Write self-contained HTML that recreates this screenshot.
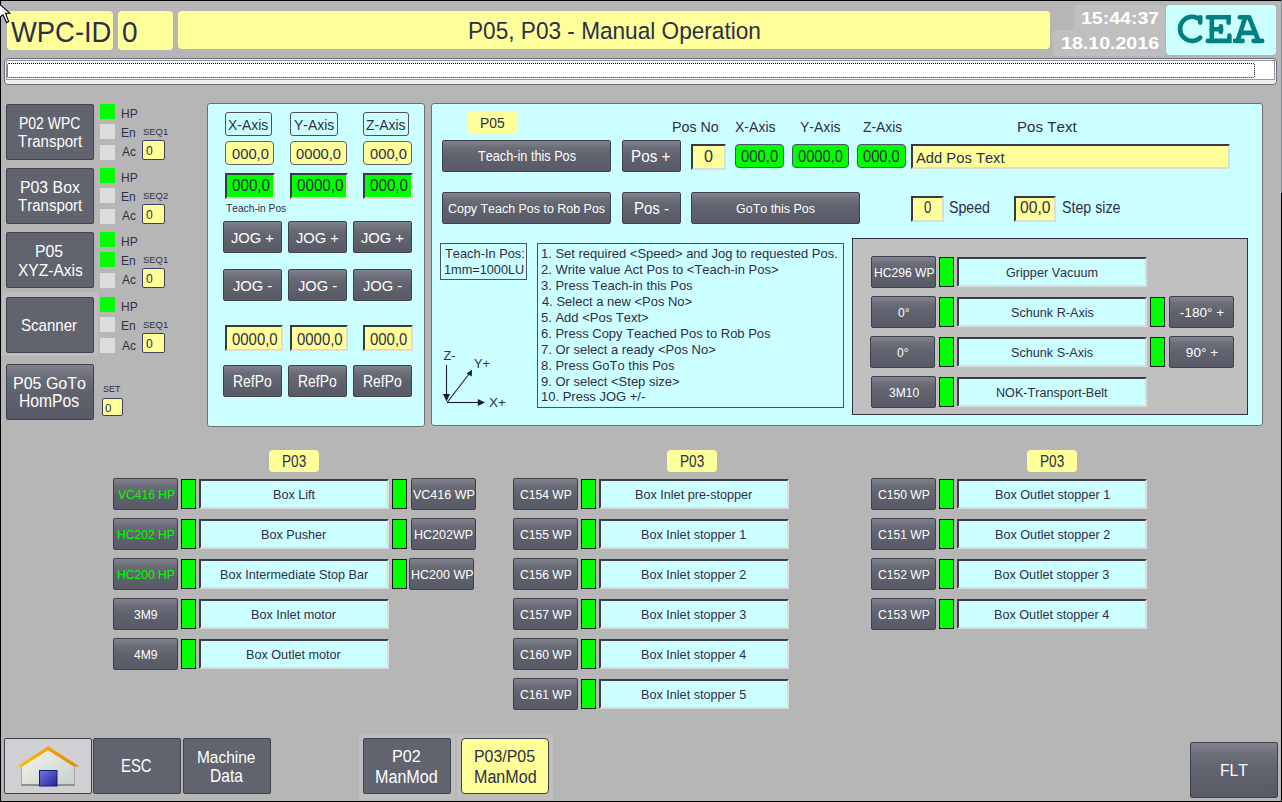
<!DOCTYPE html><html><head><meta charset="utf-8"><style>
*{margin:0;padding:0;box-sizing:border-box}
html,body{width:1282px;height:802px;overflow:hidden}
body{position:relative;background:#b6b6b6;font-family:"Liberation Sans",sans-serif;color:#2e2e48;font-kerning:none}
.a{position:absolute}
.tx{position:absolute;white-space:nowrap;line-height:1;transform-origin:0 0}
.ylw{background:#ffff99;border-radius:4px}
.cyp{background:#ccffff;border:1px solid #707070;border-radius:3px}
.btnf{background:#61636f;border:1px solid #40424c;border-radius:2px}
.btng{background:linear-gradient(#82838f 0%,#6b6d79 22%,#60626e 50%,#585a67 100%);border:1px solid #3e404c;border-radius:2px}
.snk{background:#ffff99;border-style:solid;border-width:2px;border-color:#383848 #dcdcdc #dcdcdc #383848}
.snkc{background:#ccffff;border-style:solid;border-width:2px;border-color:#3c3c4c #dcdcdc #dcdcdc #3c3c4c}
.snkg{background:#00ff00;border-style:solid;border-width:2px;border-color:#383848 #dcdcdc #dcdcdc #383848}
.grn{background:#00ff00;border:1px solid #181820}
.grnr{background:#00ff00;border:1px solid #50506a;border-radius:4px}
.inp{background:#ffff99;border:1px solid #404058;border-radius:2px}
</style></head><body><div class="a " style="left:0px;top:0px;width:1282px;height:1px;background:#000"></div>
<div class="a " style="left:0px;top:0px;width:1px;height:802px;background:#000"></div>
<div class="a " style="left:0px;top:801px;width:1282px;height:1px;background:#000"></div>
<div class="a " style="left:1281px;top:0px;width:1px;height:193px;background:#7b8a9c"></div>
<div class="a " style="left:1281px;top:193px;width:1px;height:609px;background:#000"></div>
<div class="a ylw" style="left:7px;top:11px;width:106px;height:39px;"></div>
<div class="a ylw" style="left:118px;top:11px;width:55px;height:39px;"></div>
<div class="a ylw" style="left:178px;top:11px;width:872px;height:38px;"></div>
<div class="tx" style="left:10.68px;top:17px;font-size:30.23px;transform:scaleX(0.9062);">WPC-ID</div>
<div class="tx" style="left:121.51px;top:17px;font-size:29.51px;transform:scaleX(0.9499);">0</div>
<div class="tx" style="left:468.14px;top:19px;font-size:24.13px;transform:scaleX(0.9373);">P05, P03 - Manual Operation</div>
<div class="a " style="left:1053px;top:30px;width:112px;height:26px;background:#bfbfbf;border-radius:3px"></div>
<div class="a " style="left:1074px;top:5px;width:91px;height:26px;background:#bfbfbf;border-radius:3px"></div>
<div class="tx" style="left:1081.07px;top:11px;font-size:16.86px;transform:scaleX(1.1585);color:#ffffff;font-weight:bold;">15:44:37</div>
<div class="tx" style="left:1061.07px;top:36px;font-size:16.86px;transform:scaleX(1.1619);color:#ffffff;font-weight:bold;">18.10.2016</div>
<div class="a " style="left:1166px;top:5px;width:110px;height:50px;background:#ccffff;border-radius:4px"></div>
<svg class="a" style="left:1166px;top:5px" width="110" height="50" viewBox="1166 5 110 50">
<g fill="none" stroke="#008080" stroke-width="4.6" stroke-linecap="round" stroke-linejoin="miter">
<path d="M1199.8,19.6 A12,12.1 0 1 0 1200.3,37.6"/>
<path d="M1200.2,17.4 V22.6"/>
<path d="M1207.8,17.3 H1228.6 V22.8"/>
<path d="M1211.8,17.3 V40.9"/>
<path d="M1207.8,40.9 H1229.4 V35.6"/>
<path d="M1211.8,29.2 H1220.9"/>
<path d="M1220.9,26.4 V32"/>
<path d="M1239.8,17.3 H1249.2"/>
<path d="M1245.2,17.6 L1237.6,40.9" stroke-linecap="butt"/>
<path d="M1249.2,17.3 L1258.6,40.9" stroke-linecap="butt"/>
<path d="M1241.3,32.9 H1254.6"/>
<path d="M1235,40.9 H1242.6"/>
<path d="M1253.6,40.9 H1262.2"/>
</g></svg>
<div class="a " style="left:4px;top:58px;width:1273px;height:27px;background:#f0f0f0;border:1px solid #6c6e7c;border-radius:4px"></div>
<div class="a " style="left:6px;top:60px;width:1269px;height:20px;background:#fff;border:1px solid #9496a2"></div>
<div class="a " style="left:7px;top:63px;width:1248px;height:15px;border:1px dotted #000;border-radius:2px"></div>
<div class="a " style="left:2px;top:292px;width:96px;height:64px;background:#bdbdbd"></div>
<div class="a btnf" style="left:6px;top:104px;width:88px;height:56px;"></div>
<div class="tx" style="left:19.15px;top:116px;font-size:15.99px;transform:scaleX(0.8744);color:#ffffff;">P02 WPC</div>
<div class="tx" style="left:17.86px;top:134px;font-size:15.84px;transform:scaleX(0.9493);color:#ffffff;">Transport</div>
<div class="a " style="left:100px;top:104px;width:15px;height:15px;background:#00ff00"></div>
<div class="tx" style="left:120.62px;top:108px;font-size:12.6px;transform:scaleX(0.9500);">HP</div>
<div class="a " style="left:100px;top:124px;width:15px;height:15px;background:#dcdcdc"></div>
<div class="tx" style="left:120.62px;top:127px;font-size:12.6px;transform:scaleX(0.9500);">En</div>
<div class="a " style="left:100px;top:145px;width:15px;height:15px;background:#dcdcdc"></div>
<div class="tx" style="left:121.58px;top:146px;font-size:12.6px;transform:scaleX(0.9500);">Ac</div>
<div class="tx" style="left:142.77px;top:127px;font-size:9.59px;transform:scaleX(0.9845);">SEQ1</div>
<div class="a inp" style="left:142px;top:140px;width:23px;height:20px;"></div>
<div class="tx" style="left:146.43px;top:145px;font-size:12.8px;transform:scaleX(0.9500);">0</div>
<div class="a btnf" style="left:6px;top:168px;width:88px;height:56px;"></div>
<div class="tx" style="left:19.70px;top:180px;font-size:15.99px;transform:scaleX(0.9904);color:#ffffff;">P03 Box</div>
<div class="tx" style="left:17.86px;top:198px;font-size:15.84px;transform:scaleX(0.9493);color:#ffffff;">Transport</div>
<div class="a " style="left:100px;top:168px;width:15px;height:15px;background:#00ff00"></div>
<div class="tx" style="left:120.62px;top:172px;font-size:12.6px;transform:scaleX(0.9500);">HP</div>
<div class="a " style="left:100px;top:188px;width:15px;height:15px;background:#dcdcdc"></div>
<div class="tx" style="left:120.62px;top:191px;font-size:12.6px;transform:scaleX(0.9500);">En</div>
<div class="a " style="left:100px;top:209px;width:15px;height:15px;background:#dcdcdc"></div>
<div class="tx" style="left:121.58px;top:210px;font-size:12.6px;transform:scaleX(0.9500);">Ac</div>
<div class="tx" style="left:142.77px;top:191px;font-size:9.59px;transform:scaleX(0.9851);">SEQ2</div>
<div class="a inp" style="left:142px;top:204px;width:23px;height:20px;"></div>
<div class="tx" style="left:146.43px;top:209px;font-size:12.8px;transform:scaleX(0.9500);">0</div>
<div class="a btnf" style="left:6px;top:232px;width:88px;height:56px;"></div>
<div class="tx" style="left:35.10px;top:243px;font-size:17.3px;transform:scaleX(0.9149);color:#ffffff;">P05</div>
<div class="tx" style="left:17.55px;top:262px;font-size:17.3px;transform:scaleX(0.8990);color:#ffffff;">XYZ-Axis</div>
<div class="a " style="left:100px;top:232px;width:15px;height:15px;background:#00ff00"></div>
<div class="tx" style="left:120.62px;top:236px;font-size:12.6px;transform:scaleX(0.9500);">HP</div>
<div class="a " style="left:100px;top:252px;width:15px;height:15px;background:#00ff00"></div>
<div class="tx" style="left:120.62px;top:255px;font-size:12.6px;transform:scaleX(0.9500);">En</div>
<div class="a " style="left:100px;top:273px;width:15px;height:15px;background:#dcdcdc"></div>
<div class="tx" style="left:121.58px;top:274px;font-size:12.6px;transform:scaleX(0.9500);">Ac</div>
<div class="tx" style="left:142.77px;top:255px;font-size:9.59px;transform:scaleX(0.9845);">SEQ1</div>
<div class="a inp" style="left:142px;top:268px;width:23px;height:20px;"></div>
<div class="tx" style="left:146.43px;top:273px;font-size:12.8px;transform:scaleX(0.9500);">0</div>
<div class="a btnf" style="left:6px;top:297px;width:88px;height:56px;"></div>
<div class="tx" style="left:21.42px;top:317px;font-size:17.15px;transform:scaleX(0.8788);color:#ffffff;">Scanner</div>
<div class="a " style="left:100px;top:297px;width:15px;height:15px;background:#00ff00"></div>
<div class="tx" style="left:120.62px;top:301px;font-size:12.6px;transform:scaleX(0.9500);">HP</div>
<div class="a " style="left:100px;top:317px;width:15px;height:15px;background:#dcdcdc"></div>
<div class="tx" style="left:120.62px;top:320px;font-size:12.6px;transform:scaleX(0.9500);">En</div>
<div class="a " style="left:100px;top:338px;width:15px;height:15px;background:#dcdcdc"></div>
<div class="tx" style="left:121.58px;top:340px;font-size:12.6px;transform:scaleX(0.9500);">Ac</div>
<div class="tx" style="left:142.77px;top:320px;font-size:9.59px;transform:scaleX(0.9845);">SEQ1</div>
<div class="a inp" style="left:142px;top:333px;width:23px;height:20px;"></div>
<div class="tx" style="left:146.43px;top:338px;font-size:12.8px;transform:scaleX(0.9500);">0</div>
<div class="a btng" style="left:6px;top:364px;width:88px;height:56px;"></div>
<div class="tx" style="left:12.69px;top:376px;font-size:16.72px;transform:scaleX(0.9577);color:#ffffff;">P05 GoTo</div>
<div class="tx" style="left:19.31px;top:392px;font-size:18.9px;transform:scaleX(0.8300);color:#ffffff;">HomPos</div>
<div class="tx" style="left:103.09px;top:384px;font-size:9.5px;transform:scaleX(0.9500);">SET</div>
<div class="a inp" style="left:102px;top:398px;width:21px;height:18px;"></div>
<div class="tx" style="left:105.25px;top:403px;font-size:11.34px;transform:scaleX(1.0146);">0</div>
<div class="a cyp" style="left:207px;top:103px;width:218px;height:324px;"></div>
<div class="a " style="left:225px;top:112px;width:47px;height:24px;border:1px solid #505060;border-radius:3px"></div>
<div class="tx" style="left:228.44px;top:117px;font-size:15px;transform:scaleX(0.9300);">X-Axis</div>
<div class="a inp" style="left:225px;top:141px;width:49px;height:24px;border-radius:4px;border-color:#606070"></div>
<div class="tx" style="left:231.58px;top:146px;font-size:15.5px;transform:scaleX(0.9500);">000,0</div>
<div class="a snkg" style="left:225px;top:173px;width:50px;height:26px;"></div>
<div class="tx" style="left:231.98px;top:178px;font-size:16px;transform:scaleX(0.9500);">000,0</div>
<div class="a snk" style="left:225px;top:325px;width:58px;height:26px;"></div>
<div class="tx" style="left:232.17px;top:331px;font-size:16.3px;transform:scaleX(0.9160);">0000,0</div>
<div class="a " style="left:290px;top:112px;width:48px;height:24px;border:1px solid #505060;border-radius:3px"></div>
<div class="tx" style="left:293.95px;top:117px;font-size:15px;transform:scaleX(0.9300);">Y-Axis</div>
<div class="a inp" style="left:290px;top:141px;width:57px;height:24px;border-radius:4px;border-color:#606070"></div>
<div class="tx" style="left:296.48px;top:146px;font-size:15.5px;transform:scaleX(0.9500);">0000,0</div>
<div class="a snkg" style="left:290px;top:173px;width:58px;height:26px;"></div>
<div class="tx" style="left:296.75px;top:178px;font-size:16px;transform:scaleX(0.9500);">0000,0</div>
<div class="a snk" style="left:290px;top:325px;width:58px;height:26px;"></div>
<div class="tx" style="left:297.17px;top:331px;font-size:16.3px;transform:scaleX(0.9160);">0000,0</div>
<div class="a " style="left:363px;top:112px;width:46px;height:24px;border:1px solid #505060;border-radius:3px"></div>
<div class="tx" style="left:366.27px;top:117px;font-size:15px;transform:scaleX(0.9300);">Z-Axis</div>
<div class="a inp" style="left:363px;top:141px;width:49px;height:24px;border-radius:4px;border-color:#606070"></div>
<div class="tx" style="left:369.58px;top:146px;font-size:15.5px;transform:scaleX(0.9500);">000,0</div>
<div class="a snkg" style="left:363px;top:173px;width:50px;height:26px;"></div>
<div class="tx" style="left:369.98px;top:178px;font-size:16px;transform:scaleX(0.9500);">000,0</div>
<div class="a snk" style="left:363px;top:325px;width:50px;height:26px;"></div>
<div class="tx" style="left:370.32px;top:331px;font-size:16.3px;transform:scaleX(0.9160);">000,0</div>
<div class="tx" style="left:226.17px;top:203px;font-size:11.19px;transform:scaleX(0.9131);">Teach-in Pos</div>
<div class="a btng" style="left:223px;top:221px;width:59px;height:32px;"></div>
<div class="tx" style="left:231.27px;top:230px;font-size:15.4px;transform:scaleX(0.9560);color:#ffffff;">JOG +</div>
<div class="a btng" style="left:223px;top:269px;width:59px;height:32px;"></div>
<div class="tx" style="left:233.08px;top:278px;font-size:15.4px;transform:scaleX(0.9560);color:#ffffff;">JOG -</div>
<div class="a btng" style="left:223px;top:365px;width:59px;height:32px;"></div>
<div class="tx" style="left:232.85px;top:373px;font-size:16.3px;transform:scaleX(0.8550);color:#ffffff;">RefPo</div>
<div class="a btng" style="left:288px;top:221px;width:59px;height:32px;"></div>
<div class="tx" style="left:296.27px;top:230px;font-size:15.4px;transform:scaleX(0.9560);color:#ffffff;">JOG +</div>
<div class="a btng" style="left:288px;top:269px;width:59px;height:32px;"></div>
<div class="tx" style="left:298.08px;top:278px;font-size:15.4px;transform:scaleX(0.9560);color:#ffffff;">JOG -</div>
<div class="a btng" style="left:288px;top:365px;width:59px;height:32px;"></div>
<div class="tx" style="left:297.85px;top:373px;font-size:16.3px;transform:scaleX(0.8550);color:#ffffff;">RefPo</div>
<div class="a btng" style="left:353px;top:221px;width:59px;height:32px;"></div>
<div class="tx" style="left:361.27px;top:230px;font-size:15.4px;transform:scaleX(0.9560);color:#ffffff;">JOG +</div>
<div class="a btng" style="left:353px;top:269px;width:59px;height:32px;"></div>
<div class="tx" style="left:363.08px;top:278px;font-size:15.4px;transform:scaleX(0.9560);color:#ffffff;">JOG -</div>
<div class="a btng" style="left:353px;top:365px;width:59px;height:32px;"></div>
<div class="tx" style="left:362.85px;top:373px;font-size:16.3px;transform:scaleX(0.8550);color:#ffffff;">RefPo</div>
<div class="a cyp" style="left:431px;top:103px;width:832px;height:323px;"></div>
<div class="a ylw" style="left:467px;top:111px;width:50px;height:22px;"></div>
<div class="tx" style="left:479.57px;top:116px;font-size:14.68px;transform:scaleX(0.9424);">P05</div>
<div class="a btng" style="left:442px;top:140px;width:169px;height:32px;"></div>
<div class="tx" style="left:477.91px;top:149px;font-size:14.1px;transform:scaleX(0.9001);color:#ffffff;">Teach-in this Pos</div>
<div class="a btng" style="left:622px;top:140px;width:59px;height:32px;"></div>
<div class="tx" style="left:631.35px;top:149px;font-size:15.7px;transform:scaleX(0.9709);color:#ffffff;">Pos +</div>
<div class="a btng" style="left:442px;top:192px;width:169px;height:32px;"></div>
<div class="tx" style="left:448.07px;top:202px;font-size:13.08px;transform:scaleX(0.9518);color:#ffffff;">Copy Teach Pos to Rob Pos</div>
<div class="a btng" style="left:622px;top:192px;width:59px;height:32px;"></div>
<div class="tx" style="left:633.77px;top:200px;font-size:16.13px;transform:scaleX(0.9324);color:#ffffff;">Pos -</div>
<div class="a btng" style="left:691px;top:192px;width:169px;height:32px;"></div>
<div class="tx" style="left:735.67px;top:202px;font-size:13.37px;transform:scaleX(0.9335);color:#ffffff;">GoTo this Pos</div>
<div class="tx" style="left:672.03px;top:120px;font-size:14.97px;transform:scaleX(0.9527);">Pos No</div>
<div class="tx" style="left:735.38px;top:120px;font-size:14.97px;transform:scaleX(0.9369);">X-Axis</div>
<div class="tx" style="left:800.49px;top:120px;font-size:14.97px;transform:scaleX(0.9367);">Y-Axis</div>
<div class="tx" style="left:862.56px;top:120px;font-size:14.97px;transform:scaleX(0.9228);">Z-Axis</div>
<div class="tx" style="left:1017.06px;top:119px;font-size:15.55px;transform:scaleX(0.9739);">Pos Text</div>
<div class="a snk" style="left:691px;top:144px;width:35px;height:26px;"></div>
<div class="tx" style="left:704.47px;top:149px;font-size:15.84px;transform:scaleX(1.0169);">0</div>
<div class="a grnr" style="left:735px;top:144px;width:49px;height:24px;"></div>
<div class="tx" style="left:741.02px;top:149px;font-size:15.84px;transform:scaleX(0.9375);">000,0</div>
<div class="a grnr" style="left:792px;top:144px;width:57px;height:24px;"></div>
<div class="tx" style="left:798.03px;top:149px;font-size:15.8px;transform:scaleX(0.9300);">0000,0</div>
<div class="a grnr" style="left:857px;top:144px;width:49px;height:24px;"></div>
<div class="tx" style="left:863.21px;top:149px;font-size:15.8px;transform:scaleX(0.9300);">000,0</div>
<div class="a snk" style="left:911px;top:144px;width:319px;height:25px;"></div>
<div class="tx" style="left:916.37px;top:150px;font-size:15.26px;transform:scaleX(0.9676);">Add Pos Text</div>
<div class="a snk" style="left:911px;top:196px;width:33px;height:26px;"></div>
<div class="tx" style="left:923.89px;top:200px;font-size:15.99px;transform:scaleX(0.8242);">0</div>
<div class="tx" style="left:949.36px;top:200px;font-size:15.99px;transform:scaleX(0.8858);">Speed</div>
<div class="a snk" style="left:1014px;top:196px;width:42px;height:26px;"></div>
<div class="tx" style="left:1020.09px;top:200px;font-size:15.99px;transform:scaleX(0.9775);">00,0</div>
<div class="tx" style="left:1061.75px;top:200px;font-size:15.99px;transform:scaleX(0.8891);">Step size</div>
<div class="a " style="left:440px;top:243px;width:87px;height:37px;border:1px solid #505058"></div>
<div class="tx" style="left:444.51px;top:248px;font-size:12.79px;transform:scaleX(1.0030);">Teach-In Pos:</div>
<div class="tx" style="left:443.83px;top:264px;font-size:12.79px;transform:scaleX(0.9958);">1mm=1000LU</div>
<div class="a " style="left:537px;top:243px;width:307px;height:165px;border:1px solid #505058"></div>
<div class="tx" style="left:540.81px;top:248px;font-size:12.8px;transform:scaleX(1.0150);">1. Set required &lt;Speed&gt; and Jog to requested Pos.</div>
<div class="tx" style="left:541.15px;top:264px;font-size:12.8px;transform:scaleX(1.0150);">2. Write value Act Pos to &lt;Teach-in Pos&gt;</div>
<div class="tx" style="left:541.31px;top:280px;font-size:12.8px;transform:scaleX(1.0150);">3. Press Teach-in this Pos</div>
<div class="tx" style="left:541.50px;top:296px;font-size:12.8px;transform:scaleX(1.0150);">4. Select a new &lt;Pos No&gt;</div>
<div class="tx" style="left:541.28px;top:312px;font-size:12.8px;transform:scaleX(1.0150);">5. Add &lt;Pos Text&gt;</div>
<div class="tx" style="left:541.14px;top:328px;font-size:12.8px;transform:scaleX(1.0150);">6. Press Copy Teached Pos to Rob Pos</div>
<div class="tx" style="left:541.13px;top:344px;font-size:12.8px;transform:scaleX(1.0150);">7. Or select a ready &lt;Pos No&gt;</div>
<div class="tx" style="left:541.24px;top:360px;font-size:12.8px;transform:scaleX(1.0150);">8. Press GoTo this Pos</div>
<div class="tx" style="left:541.19px;top:376px;font-size:12.8px;transform:scaleX(1.0150);">9. Or select &lt;Step size&gt;</div>
<div class="tx" style="left:540.81px;top:391px;font-size:12.8px;transform:scaleX(1.0150);">10. Press JOG +/-</div>
<svg class="a" style="left:436px;top:345px" width="80" height="70" viewBox="436 345 80 70">
<g stroke="#1c1c34" stroke-width="1.1" fill="none">
<line x1="446.5" y1="365" x2="446.5" y2="395"/>
<line x1="447" y1="402.5" x2="479" y2="402.5"/>
<line x1="447.5" y1="402" x2="469" y2="374"/>
</g>
<g fill="#1c1c34">
<polygon points="443,394 450,394 446.5,401.5"/>
<polygon points="477.8,399 477.8,406 485,402.5"/>
<polygon points="472,369.8 466.6,373.4 471.8,376.4"/>
</g>
</svg>
<div class="tx" style="left:443.50px;top:350px;font-size:12.6px;">Z-</div>
<div class="tx" style="left:473.72px;top:358px;font-size:12.79px;transform:scaleX(0.9942);">Y+</div>
<div class="tx" style="left:488.70px;top:397px;font-size:12.06px;transform:scaleX(1.1251);">X+</div>
<div class="a " style="left:852px;top:238px;width:396px;height:177px;background:#c0c0c0;border:1px solid #303040"></div>
<div class="a btng" style="left:871px;top:256px;width:65px;height:32px;"></div>
<div class="tx" style="left:873.55px;top:266px;font-size:13.6px;transform:scaleX(0.8900);color:#ffffff;">HC296 WP</div>
<div class="a grn" style="left:939px;top:257px;width:15px;height:30px;"></div>
<div class="a snkc" style="left:957px;top:257px;width:190px;height:30px;"></div>
<div class="tx" style="left:1006.40px;top:266px;font-size:13.3px;transform:scaleX(0.9500);">Gripper Vacuum</div>
<div class="a btng" style="left:871px;top:296px;width:65px;height:32px;"></div>
<div class="tx" style="left:898.34px;top:306px;font-size:13.6px;transform:scaleX(0.8900);color:#ffffff;">0°</div>
<div class="a grn" style="left:939px;top:297px;width:15px;height:30px;"></div>
<div class="a snkc" style="left:957px;top:297px;width:190px;height:30px;"></div>
<div class="tx" style="left:1010.81px;top:306px;font-size:13.3px;transform:scaleX(0.9500);">Schunk R-Axis</div>
<div class="a grn" style="left:1150px;top:297px;width:15px;height:30px;"></div>
<div class="a btng" style="left:1169px;top:296px;width:65px;height:32px;"></div>
<div class="tx" style="left:1179.84px;top:306px;font-size:13.6px;color:#ffffff;">-180° +</div>
<div class="a btng" style="left:870px;top:336px;width:65px;height:32px;"></div>
<div class="tx" style="left:897.34px;top:346px;font-size:13.6px;transform:scaleX(0.8900);color:#ffffff;">0°</div>
<div class="a grn" style="left:939px;top:337px;width:15px;height:30px;"></div>
<div class="a snkc" style="left:957px;top:337px;width:190px;height:30px;"></div>
<div class="tx" style="left:1011.16px;top:346px;font-size:13.3px;transform:scaleX(0.9500);">Schunk S-Axis</div>
<div class="a grn" style="left:1150px;top:337px;width:15px;height:30px;"></div>
<div class="a btng" style="left:1169px;top:336px;width:65px;height:32px;"></div>
<div class="tx" style="left:1185.87px;top:346px;font-size:13.6px;color:#ffffff;">90° +</div>
<div class="a btng" style="left:871px;top:376px;width:65px;height:32px;"></div>
<div class="tx" style="left:888.87px;top:386px;font-size:13.6px;transform:scaleX(0.8900);color:#ffffff;">3M10</div>
<div class="a grn" style="left:939px;top:377px;width:15px;height:30px;"></div>
<div class="a snkc" style="left:957px;top:377px;width:190px;height:30px;"></div>
<div class="tx" style="left:996.01px;top:386px;font-size:13.3px;transform:scaleX(0.9500);">NOK-Transport-Belt</div>
<div class="a ylw" style="left:269px;top:450px;width:50px;height:22px;"></div>
<div class="tx" style="left:281.78px;top:454px;font-size:15.84px;transform:scaleX(0.8592);">P03</div>
<div class="a ylw" style="left:667px;top:450px;width:50px;height:22px;"></div>
<div class="tx" style="left:679.78px;top:454px;font-size:15.84px;transform:scaleX(0.8592);">P03</div>
<div class="a ylw" style="left:1027px;top:450px;width:50px;height:22px;"></div>
<div class="tx" style="left:1039.78px;top:454px;font-size:15.84px;transform:scaleX(0.8592);">P03</div>
<div class="a btng" style="left:113px;top:478px;width:65px;height:32px;"></div>
<div class="tx" style="left:117.70px;top:488px;font-size:13.6px;transform:scaleX(0.8900);color:#00ff00;">VC416 HP</div>
<div class="a grn" style="left:181px;top:479px;width:15px;height:30px;"></div>
<div class="a snkc" style="left:199px;top:479px;width:190px;height:30px;"></div>
<div class="tx" style="left:272.76px;top:488px;font-size:13.3px;transform:scaleX(0.9500);">Box Lift</div>
<div class="a grn" style="left:392px;top:479px;width:15px;height:30px;"></div>
<div class="a btng" style="left:411px;top:478px;width:65px;height:32px;"></div>
<div class="tx" style="left:413.36px;top:488px;font-size:13.6px;transform:scaleX(0.9200);color:#ffffff;">VC416 WP</div>
<div class="a btng" style="left:113px;top:518px;width:65px;height:32px;"></div>
<div class="tx" style="left:116.90px;top:528px;font-size:13.6px;transform:scaleX(0.8900);color:#00ff00;">HC202 HP</div>
<div class="a grn" style="left:181px;top:519px;width:15px;height:30px;"></div>
<div class="a snkc" style="left:199px;top:519px;width:190px;height:30px;"></div>
<div class="tx" style="left:261.23px;top:528px;font-size:13.3px;transform:scaleX(0.9500);">Box Pusher</div>
<div class="a grn" style="left:392px;top:519px;width:15px;height:30px;"></div>
<div class="a btng" style="left:411px;top:518px;width:65px;height:32px;"></div>
<div class="tx" style="left:414.27px;top:528px;font-size:13.6px;transform:scaleX(0.9200);color:#ffffff;">HC202WP</div>
<div class="a btng" style="left:113px;top:558px;width:65px;height:32px;"></div>
<div class="tx" style="left:116.90px;top:568px;font-size:13.6px;transform:scaleX(0.8900);color:#00ff00;">HC200 HP</div>
<div class="a grn" style="left:181px;top:559px;width:15px;height:30px;"></div>
<div class="a snkc" style="left:199px;top:559px;width:190px;height:30px;"></div>
<div class="tx" style="left:219.79px;top:568px;font-size:13.3px;transform:scaleX(0.9500);">Box Intermediate Stop Bar</div>
<div class="a grn" style="left:392px;top:559px;width:15px;height:30px;"></div>
<div class="a btng" style="left:409px;top:558px;width:65px;height:32px;"></div>
<div class="tx" style="left:410.53px;top:568px;font-size:13.6px;transform:scaleX(0.9200);color:#ffffff;">HC200 WP</div>
<div class="a btng" style="left:113px;top:598px;width:65px;height:32px;"></div>
<div class="tx" style="left:134.28px;top:608px;font-size:13.6px;transform:scaleX(0.8900);color:#ffffff;">3M9</div>
<div class="a grn" style="left:181px;top:599px;width:15px;height:30px;"></div>
<div class="a snkc" style="left:199px;top:599px;width:190px;height:30px;"></div>
<div class="tx" style="left:251.40px;top:608px;font-size:13.3px;transform:scaleX(0.9500);">Box Inlet motor</div>
<div class="a btng" style="left:113px;top:638px;width:65px;height:32px;"></div>
<div class="tx" style="left:134.37px;top:648px;font-size:13.6px;transform:scaleX(0.8900);color:#ffffff;">4M9</div>
<div class="a grn" style="left:181px;top:639px;width:15px;height:30px;"></div>
<div class="a snkc" style="left:199px;top:639px;width:190px;height:30px;"></div>
<div class="tx" style="left:246.49px;top:648px;font-size:13.3px;transform:scaleX(0.9500);">Box Outlet motor</div>
<div class="a btng" style="left:513px;top:478px;width:65px;height:32px;"></div>
<div class="tx" style="left:520.11px;top:488px;font-size:13.6px;transform:scaleX(0.8900);color:#ffffff;">C154 WP</div>
<div class="a grn" style="left:581px;top:479px;width:15px;height:30px;"></div>
<div class="a snkc" style="left:599px;top:479px;width:190px;height:30px;"></div>
<div class="tx" style="left:635.24px;top:488px;font-size:13.3px;transform:scaleX(0.9500);">Box Inlet pre-stopper</div>
<div class="a btng" style="left:513px;top:518px;width:65px;height:32px;"></div>
<div class="tx" style="left:520.11px;top:528px;font-size:13.6px;transform:scaleX(0.8900);color:#ffffff;">C155 WP</div>
<div class="a grn" style="left:581px;top:519px;width:15px;height:30px;"></div>
<div class="a snkc" style="left:599px;top:519px;width:190px;height:30px;"></div>
<div class="tx" style="left:641.41px;top:528px;font-size:13.3px;transform:scaleX(0.9500);">Box Inlet stopper 1</div>
<div class="a btng" style="left:513px;top:558px;width:65px;height:32px;"></div>
<div class="tx" style="left:520.11px;top:568px;font-size:13.6px;transform:scaleX(0.8900);color:#ffffff;">C156 WP</div>
<div class="a grn" style="left:581px;top:559px;width:15px;height:30px;"></div>
<div class="a snkc" style="left:599px;top:559px;width:190px;height:30px;"></div>
<div class="tx" style="left:641.42px;top:568px;font-size:13.3px;transform:scaleX(0.9500);">Box Inlet stopper 2</div>
<div class="a btng" style="left:513px;top:598px;width:65px;height:32px;"></div>
<div class="tx" style="left:520.11px;top:608px;font-size:13.6px;transform:scaleX(0.8900);color:#ffffff;">C157 WP</div>
<div class="a grn" style="left:581px;top:599px;width:15px;height:30px;"></div>
<div class="a snkc" style="left:599px;top:599px;width:190px;height:30px;"></div>
<div class="tx" style="left:641.38px;top:608px;font-size:13.3px;transform:scaleX(0.9500);">Box Inlet stopper 3</div>
<div class="a btng" style="left:513px;top:638px;width:65px;height:32px;"></div>
<div class="tx" style="left:520.11px;top:648px;font-size:13.6px;transform:scaleX(0.8900);color:#ffffff;">C160 WP</div>
<div class="a grn" style="left:581px;top:639px;width:15px;height:30px;"></div>
<div class="a snkc" style="left:599px;top:639px;width:190px;height:30px;"></div>
<div class="tx" style="left:641.29px;top:648px;font-size:13.3px;transform:scaleX(0.9500);">Box Inlet stopper 4</div>
<div class="a btng" style="left:513px;top:678px;width:65px;height:32px;"></div>
<div class="tx" style="left:520.11px;top:688px;font-size:13.6px;transform:scaleX(0.8900);color:#ffffff;">C161 WP</div>
<div class="a grn" style="left:581px;top:679px;width:15px;height:30px;"></div>
<div class="a snkc" style="left:599px;top:679px;width:190px;height:30px;"></div>
<div class="tx" style="left:641.37px;top:688px;font-size:13.3px;transform:scaleX(0.9500);">Box Inlet stopper 5</div>
<div class="a btng" style="left:871px;top:478px;width:65px;height:32px;"></div>
<div class="tx" style="left:878.11px;top:488px;font-size:13.6px;transform:scaleX(0.8900);color:#ffffff;">C150 WP</div>
<div class="a grn" style="left:939px;top:479px;width:15px;height:30px;"></div>
<div class="a snkc" style="left:957px;top:479px;width:190px;height:30px;"></div>
<div class="tx" style="left:994.50px;top:488px;font-size:13.3px;transform:scaleX(0.9500);">Box Outlet stopper 1</div>
<div class="a btng" style="left:871px;top:518px;width:65px;height:32px;"></div>
<div class="tx" style="left:878.11px;top:528px;font-size:13.6px;transform:scaleX(0.8900);color:#ffffff;">C151 WP</div>
<div class="a grn" style="left:939px;top:519px;width:15px;height:30px;"></div>
<div class="a snkc" style="left:957px;top:519px;width:190px;height:30px;"></div>
<div class="tx" style="left:994.51px;top:528px;font-size:13.3px;transform:scaleX(0.9500);">Box Outlet stopper 2</div>
<div class="a btng" style="left:871px;top:558px;width:65px;height:32px;"></div>
<div class="tx" style="left:878.11px;top:568px;font-size:13.6px;transform:scaleX(0.8900);color:#ffffff;">C152 WP</div>
<div class="a grn" style="left:939px;top:559px;width:15px;height:30px;"></div>
<div class="a snkc" style="left:957px;top:559px;width:190px;height:30px;"></div>
<div class="tx" style="left:994.47px;top:568px;font-size:13.3px;transform:scaleX(0.9500);">Box Outlet stopper 3</div>
<div class="a btng" style="left:871px;top:598px;width:65px;height:32px;"></div>
<div class="tx" style="left:878.11px;top:608px;font-size:13.6px;transform:scaleX(0.8900);color:#ffffff;">C153 WP</div>
<div class="a grn" style="left:939px;top:599px;width:15px;height:30px;"></div>
<div class="a snkc" style="left:957px;top:599px;width:190px;height:30px;"></div>
<div class="tx" style="left:994.38px;top:608px;font-size:13.3px;transform:scaleX(0.9500);">Box Outlet stopper 4</div>
<div class="a " style="left:4px;top:738px;width:88px;height:56px;background:#d0d0d2;border:1px solid #3e404c;border-radius:2px"></div>
<svg class="a" style="left:4px;top:738px" width="88" height="56" viewBox="4 738 88 56">
<defs><linearGradient id="hw" x1="0" y1="0" x2="1" y2="1"><stop offset="0" stop-color="#f6f6ee"/><stop offset="1" stop-color="#c4d0c8"/></linearGradient>
<linearGradient id="dr" x1="0" y1="0" x2="1" y2="1"><stop offset="0" stop-color="#7076f0"/><stop offset="1" stop-color="#24248c"/></linearGradient>
<linearGradient id="rf" x1="0" y1="0" x2="1" y2="0"><stop offset="0" stop-color="#ffbc00"/><stop offset="1" stop-color="#e08a10"/></linearGradient></defs>
<polygon points="21,766 48,749 75,766 75,786 21,786" fill="url(#hw)"/>
<rect x="21" y="766" width="1" height="20" fill="#a8aca8"/>
<rect x="74" y="766" width="1" height="20" fill="#a8aca8"/>
<rect x="21" y="784" width="54" height="2" fill="#8c928c"/>
<polygon points="17,766.5 48,746.3 79.5,766.5 73.5,766.5 48,750.3 22.5,766.5" fill="url(#rf)"/>
<rect x="39.5" y="770.5" width="17.5" height="15.5" fill="url(#dr)" stroke="#1c1c78" stroke-width="1"/>
</svg>
<div class="a btnf" style="left:93px;top:738px;width:88px;height:56px;"></div>
<div class="tx" style="left:121.18px;top:758px;font-size:17.88px;transform:scaleX(0.8320);color:#ffffff;">ESC</div>
<div class="a btnf" style="left:183px;top:738px;width:88px;height:56px;"></div>
<div class="tx" style="left:197.43px;top:749px;font-size:17.15px;transform:scaleX(0.9002);color:#ffffff;">Machine</div>
<div class="tx" style="left:210.32px;top:768px;font-size:17.73px;transform:scaleX(0.8779);color:#ffffff;">Data</div>
<div class="a " style="left:359px;top:734px;width:96px;height:66px;background:#bebebe"></div>
<div class="a " style="left:457px;top:734px;width:96px;height:66px;background:#bebebe"></div>
<div class="a btnf" style="left:363px;top:738px;width:88px;height:56px;"></div>
<div class="tx" style="left:391.77px;top:749px;font-size:16.72px;transform:scaleX(0.9696);color:#ffffff;">P02</div>
<div class="tx" style="left:375.48px;top:769px;font-size:17.88px;transform:scaleX(0.9022);color:#ffffff;">ManMod</div>
<div class="a " style="left:461px;top:738px;width:88px;height:56px;background:#ffff99;border:1px solid #3e404c;border-radius:4px"></div>
<div class="tx" style="left:473.69px;top:749px;font-size:16.72px;transform:scaleX(0.9521);">P03/P05</div>
<div class="tx" style="left:473.68px;top:769px;font-size:17.88px;transform:scaleX(0.9007);">ManMod</div>
<div class="a btng" style="left:1190px;top:742px;width:88px;height:56px;"></div>
<div class="tx" style="left:1219.51px;top:762px;font-size:17.3px;transform:scaleX(0.9088);color:#ffffff;">FLT</div>
<svg class="a" style="left:0;top:0" width="14" height="24" viewBox="0 0 14 24">
<path d="M-1,3.5 L9.8,13.2 L5.6,13.2 L8.6,21.4 L6.6,22.6 L3,14.8 L-1,17.5 Z" fill="#fff" stroke="#000" stroke-width="1.1"/></svg></body></html>
